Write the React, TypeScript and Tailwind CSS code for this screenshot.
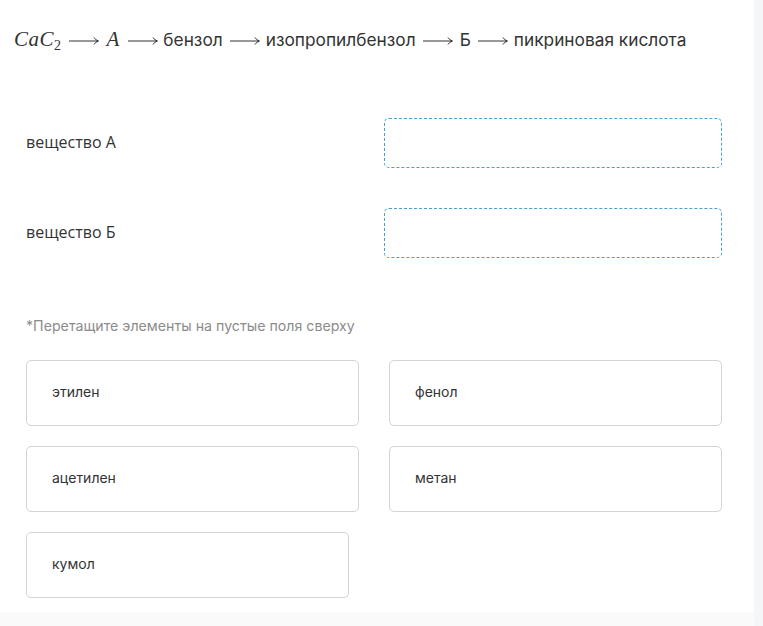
import React from "react";

const Arrow = ({ l = 7, r = 6 }: { l?: number; r?: number }) => (
  <svg
    width="30"
    height="10"
    viewBox="0 0 30 10"
    className="self-center translate-y-[1px] shrink-0"
    style={{ marginLeft: l, marginRight: r }}
  >
    <line x1="0" y1="5" x2="29" y2="5" stroke="#333" strokeWidth="1" />
    <path d="M25 1.5 Q26.5 4.2 29.5 5 Q26.5 5.8 25 8.5" fill="none" stroke="#333" strokeWidth="1" />
  </svg>
);

const Card = ({ children, w }: { children: React.ReactNode; w: string }) => (
  <div className={`${w} h-[66px] border border-[#d4d4d4] rounded-[5px] flex items-center pl-[25px] pb-[3px] text-[14px] text-[#333]`}>
    {children}
  </div>
);

export default function App() {
  return (
    <div className="w-[763px] h-[626px] flex bg-white" style={{ fontFamily: "Inter, 'Open Sans', sans-serif" }}>
      <div className="w-[754px] flex flex-col">
        <div className="flex-1 bg-white">
          <div className="flex items-center pl-[14px] pt-[25px] h-[54px] text-[17.3px] text-[#333]">
            <span className="italic text-[21px] tracking-[0.5px]" style={{ fontFamily: "'Liberation Serif', serif" }}>
              CaC<span className="not-italic text-[14px] relative top-[4px]">2</span>
            </span>
            <Arrow l={7} r={8} />
            <span className="italic text-[21px] pr-[1px]" style={{ fontFamily: "'Liberation Serif', serif" }}>A</span>
            <Arrow l={8} r={5} />
            <span>бензол</span>
            <Arrow l={7} r={6} />
            <span>изопропилбензол</span>
            <Arrow l={7} r={7} />
            <span>Б</span>
            <Arrow l={7} r={6} />
            <span>пикриновая кислота</span>
          </div>
          <div className="mt-[64px] pl-[26px] pr-[32px]">
            <div className="flex items-center h-[50px] justify-between">
              <span className="text-[16px] text-[#333] pb-[2px]" style={{ fontFamily: "'Open Sans', sans-serif" }}>вещество А</span>
              <div className="w-[338px] h-[50px] border border-dashed border-[#4a9fd0] rounded-[5px]" />
            </div>
            <div className="flex items-center h-[50px] justify-between mt-[40px]">
              <span className="text-[16px] text-[#333] pb-[2px]" style={{ fontFamily: "'Open Sans', sans-serif" }}>вещество Б</span>
              <div className="w-[338px] h-[50px] border border-dashed border-[#4a9fd0] rounded-[5px]" />
            </div>
          </div>
          <div className="pl-[26px] mt-[57px] text-[14.2px] text-[#8c8c8c]">*Перетащите элементы на пустые поля сверху</div>
          <div className="pl-[26px] mt-[24px] flex flex-col gap-[20px]">
            <div className="flex gap-[30px]">
              <Card w="w-[333px]">этилен</Card>
              <Card w="w-[333px]">фенол</Card>
            </div>
            <div className="flex gap-[30px]">
              <Card w="w-[333px]">ацетилен</Card>
              <Card w="w-[333px]">метан</Card>
            </div>
            <div className="flex gap-[30px]">
              <Card w="w-[323px]">кумол</Card>
            </div>
          </div>
        </div>
        <div className="h-[14px] bg-[#fafafa]" />
      </div>
      <div className="w-[9px] bg-[#f5f6f8]" />
    </div>
  );
}
